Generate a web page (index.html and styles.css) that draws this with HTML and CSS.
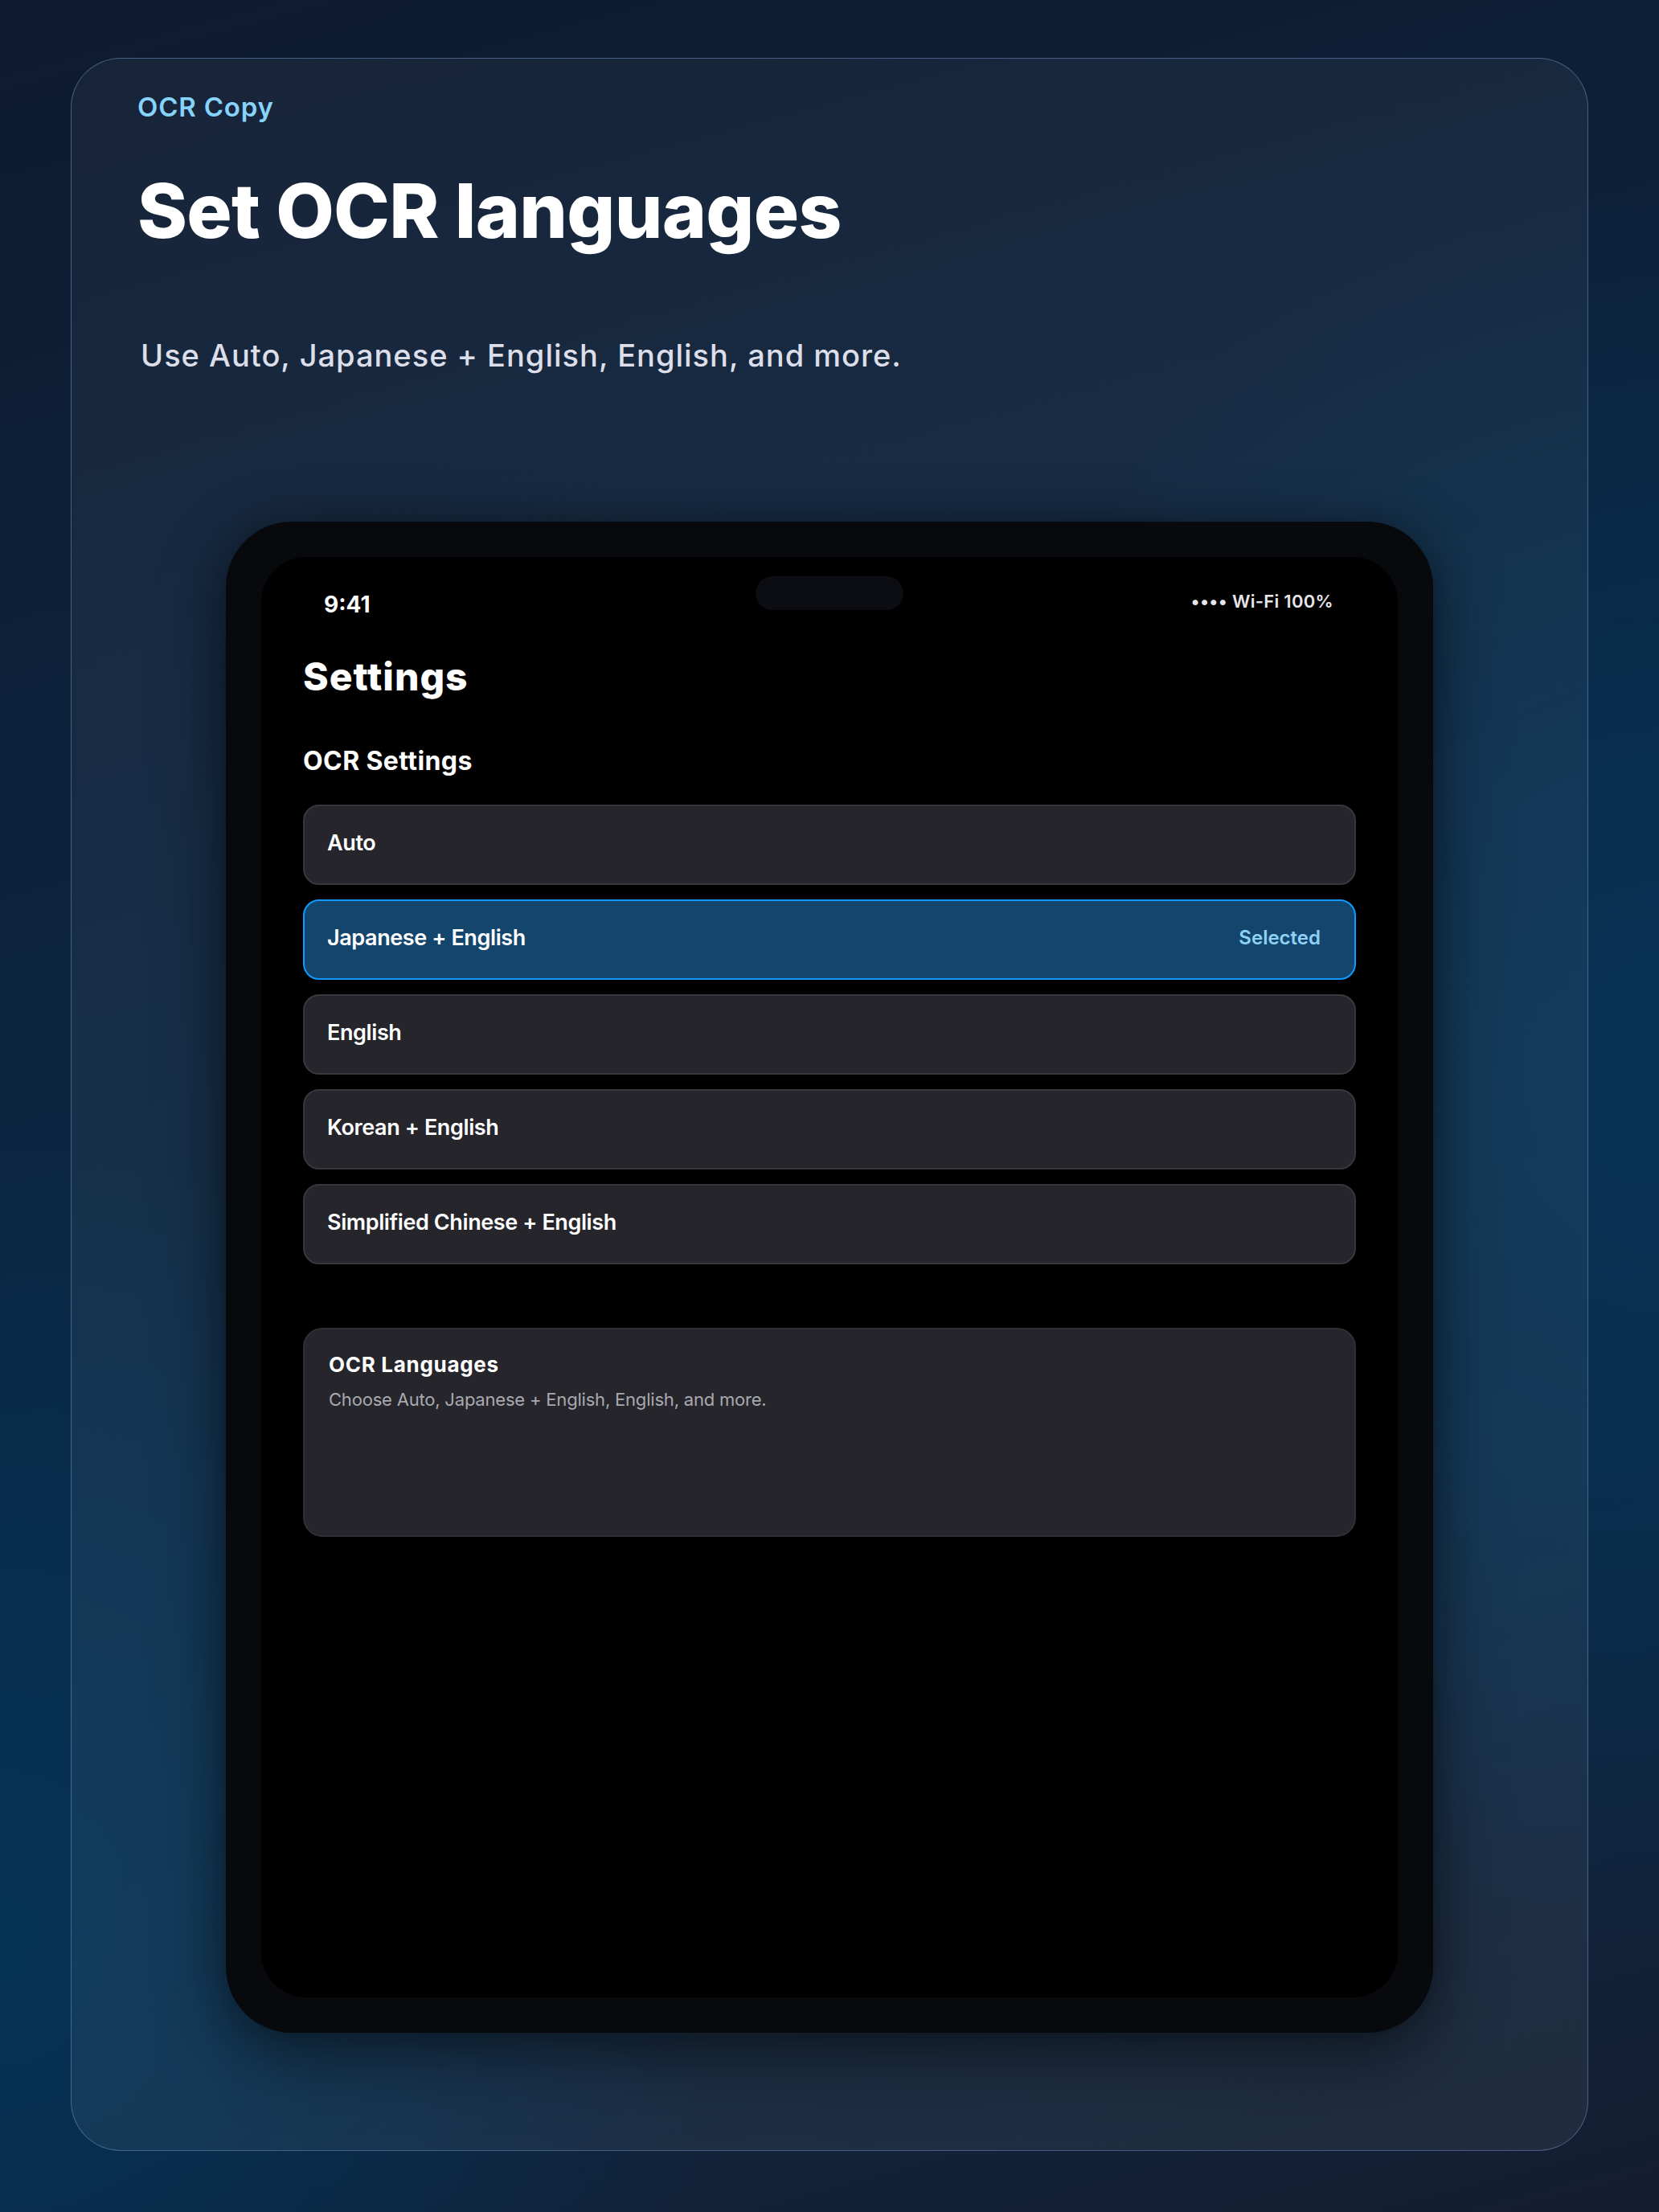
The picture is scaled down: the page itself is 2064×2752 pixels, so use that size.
FILE: index.html
```html
<!DOCTYPE html>
<html lang="en">
<head>
<meta charset="utf-8">
<title>OCR Copy – Set OCR languages</title>
<link rel="stylesheet" href="styles.css">
</head>
<body>
<div class="page">
  <section class="card">
    <div class="eyebrow">OCR Copy</div>
    <h1 class="headline">Set OCR languages</h1>
    <p class="subline">Use Auto, Japanese + English, English, and more.</p>

    <div class="device">
      <div class="screen">
        <div class="island"></div>
        <div class="statusbar">
          <span class="time">9:41</span>
          <span class="status">•••• Wi-Fi 100%</span>
        </div>
        <div class="content">
          <h2 class="screen-title">Settings</h2>
          <h3 class="section-title">OCR Settings</h3>
          <div class="options">
            <div class="option"><span class="option-label">Auto</span></div>
            <div class="option option-selected"><span class="option-label">Japanese + English</span><span class="option-badge">Selected</span></div>
            <div class="option"><span class="option-label">English</span></div>
            <div class="option"><span class="option-label">Korean + English</span></div>
            <div class="option"><span class="option-label">Simplified Chinese + English</span></div>
          </div>
          <div class="info">
            <div class="info-title">OCR Languages</div>
            <div class="info-text">Choose Auto, Japanese + English, English, and more.</div>
          </div>
        </div>
      </div>
    </div>
  </section>
</div>
</body>
</html>
```

FILE: styles.css
```css
* { box-sizing: border-box; }

html, body {
  margin: 0;
  padding: 0;
}

body {
  width: 2064px;
  height: 2752px;
  font-family: Inter, "Noto Sans", "Liberation Sans", sans-serif;
  color: #fff;
  background:
    radial-gradient(ellipse 900px 1100px at 100% 48%, rgba(6, 52, 88, 0.85) 0%, rgba(6, 52, 88, 0) 100%),
    radial-gradient(ellipse 900px 1000px at 0% 88%, rgba(4, 52, 88, 0.9) 0%, rgba(4, 52, 88, 0) 100%),
    linear-gradient(165deg, #0e1a2f 0%, #0b2641 45%, #0a2a47 70%, #151d30 100%);
  overflow: hidden;
}

.page {
  padding: 72px 88px 76px;
}

.card {
  height: 2604px;
  border: 1px solid rgba(110, 140, 185, 0.55);
  border-radius: 62px;
  background: linear-gradient(160deg, rgba(255,255,255,0.045) 0%, rgba(255,255,255,0.05) 60%, rgba(255,255,255,0.06) 100%);
  padding: 40px 82px 0;
  display: flex;
  flex-direction: column;
}

.eyebrow {
  font-size: 33px;
  line-height: 40px;
  font-weight: 600;
  letter-spacing: 0.8px;
  color: #86d3fb;
}

.headline {
  margin: 58px 0 0;
  font-size: 94px;
  line-height: 103px;
  font-weight: 800;
  letter-spacing: -0.7px;
  color: #ffffff;
}

.subline {
  margin: 104px 0 0 4px;
  font-size: 38px;
  line-height: 48px;
  font-weight: 500;
  letter-spacing: 1px;
  color: #dcdfe9;
}

.device {
  margin: 183px auto 0;
  width: 1502px;
  height: 1880px;
  padding: 44px;
  border-radius: 82px;
  background: #07090d;
  box-shadow: 0 30px 90px rgba(0, 0, 0, 0.45), 0 0 40px rgba(0, 0, 0, 0.25);
}

.screen {
  position: relative;
  height: 100%;
  border-radius: 56px;
  background: #000;
  overflow: hidden;
}

.island {
  position: absolute;
  top: 24px;
  left: 50%;
  width: 184px;
  height: 42px;
  margin-left: -92px;
  border-radius: 21px;
  background: #0c0d12;
}

.statusbar {
  display: flex;
  justify-content: space-between;
  align-items: flex-start;
  padding: 42px 80px 0 78px;
  height: 76px;
}

.time {
  font-size: 28px;
  line-height: 34px;
  font-weight: 700;
  color: #fff;
}

.status {
  font-size: 22px;
  line-height: 22px;
  font-weight: 600;
  color: #e6e6ec;
  letter-spacing: 0.3px;
  margin-top: 2px;
}

.content {
  padding: 0 52px;
}

.screen-title {
  margin: 44px 0 0;
  font-size: 48px;
  line-height: 58px;
  font-weight: 800;
  letter-spacing: 1px;
  color: #fff;
}

.section-title {
  margin: 58px 0 0;
  font-size: 32px;
  line-height: 36px;
  font-weight: 700;
  letter-spacing: 0.4px;
  color: #fff;
}

.options {
  margin-top: 36px;
  display: flex;
  flex-direction: column;
  gap: 18px;
}

.option {
  height: 100px;
  border: 2px solid #37373d;
  border-radius: 20px;
  background: #25252b;
  padding: 0 42px 5px 28px;
  display: flex;
  align-items: center;
  justify-content: space-between;
}

.option-label {
  font-size: 27px;
  font-weight: 600;
  letter-spacing: -0.4px;
  color: #fff;
}

.option-selected {
  background: #14466d;
  border-color: #0e9bff;
}

.option-badge {
  font-size: 24px;
  font-weight: 600;
  color: #8fd0f5;
}

.info {
  margin-top: 79px;
  height: 260px;
  border: 2px solid #2f2f35;
  border-radius: 24px;
  background: #25252b;
  padding: 28px 30px 0;
}

.info-title {
  font-size: 26px;
  line-height: 32px;
  font-weight: 700;
  letter-spacing: 0.7px;
  color: #fff;
}

.info-text {
  margin-top: 12px;
  font-size: 22px;
  line-height: 30px;
  font-weight: 400;
  letter-spacing: -0.2px;
  color: #a9a9b0;
}
```
